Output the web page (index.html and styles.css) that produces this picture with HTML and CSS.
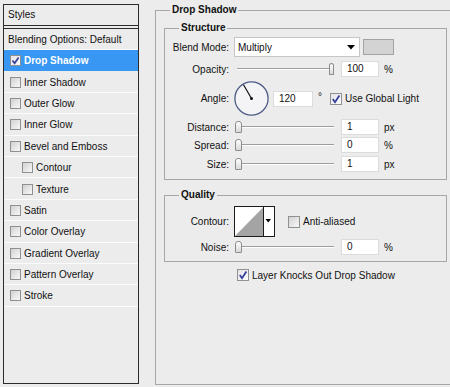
FILE: index.html
```html
<!DOCTYPE html>
<html lang="en">
<head>
    <meta charset="UTF-8">
    <meta name="viewport" content="width=device-width, initial-scale=1.0">
    <title>Layer Style</title>
    <link rel="stylesheet" href="styles.css">
</head>
<body>
    <div class="styles-panel">
        <div class="styles-head">Styles</div>
        <div class="style-item plain">Blending Options: Default</div>
        <div class="style-item selected">
            <span class="cb checked"><svg width="9" height="9" viewBox="0 0 9 9"><path d="M1.5 4.5 L3.6 7.2 L7.6 1.4" fill="none" stroke="#34409a" stroke-width="1.7"/></svg></span>Drop Shadow
        </div>
        <div class="style-item"><span class="cb"></span>Inner Shadow</div>
        <div class="style-item"><span class="cb"></span>Outer Glow</div>
        <div class="style-item"><span class="cb"></span>Inner Glow</div>
        <div class="style-item"><span class="cb"></span>Bevel and Emboss</div>
        <div class="style-item sub"><span class="cb"></span>Contour</div>
        <div class="style-item sub"><span class="cb"></span>Texture</div>
        <div class="style-item"><span class="cb"></span>Satin</div>
        <div class="style-item"><span class="cb"></span>Color Overlay</div>
        <div class="style-item"><span class="cb"></span>Gradient Overlay</div>
        <div class="style-item"><span class="cb"></span>Pattern Overlay</div>
        <div class="style-item"><span class="cb"></span>Stroke</div>
    </div>

    <fieldset class="group effect">
        <legend>Drop Shadow</legend>

        <fieldset class="group section structure">
            <legend>Structure</legend>

            <div class="row blend-row">
                <span class="lbl">Blend Mode:</span>
                <div class="select">
                    Multiply
                    <svg width="8" height="5" viewBox="0 0 8 5"><polygon points="0,0 8,0 4,4.5" fill="#000"/></svg>
                </div>
                <div class="swatch"></div>
            </div>

            <div class="row opacity-row">
                <span class="lbl">Opacity:</span>
                <div class="slider"><span class="thumb max"></span></div>
                <span class="field">100</span>
                <span class="unit">%</span>
            </div>

            <div class="row angle-row">
                <span class="lbl">Angle:</span>
                <svg class="dial" width="35" height="35" viewBox="0 0 35 35">
                    <circle cx="17.5" cy="17.5" r="16.6" fill="#f4f4f7" stroke="#4d5b86" stroke-width="1.3"/>
                    <line x1="17.5" y1="17.5" x2="9.5" y2="3.7" stroke="#111" stroke-width="1.2"/>
                    <circle cx="17.5" cy="17.5" r="1.5" fill="#111"/>
                </svg>
                <span class="field wide">120</span>
                <span class="degree">°</span>
                <span class="cb big checked"><svg width="10" height="10" viewBox="0 0 10 10"><path d="M1.8 5 L4 8.2 L8.4 1.5" fill="none" stroke="#34409a" stroke-width="1.8"/></svg></span>
                <span class="cb-label">Use Global Light</span>
            </div>

            <div class="row distance-row">
                <span class="lbl">Distance:</span>
                <div class="slider"><span class="thumb"></span></div>
                <span class="field">1</span>
                <span class="unit">px</span>
            </div>

            <div class="row spread-row">
                <span class="lbl">Spread:</span>
                <div class="slider"><span class="thumb"></span></div>
                <span class="field">0</span>
                <span class="unit">%</span>
            </div>

            <div class="row size-row">
                <span class="lbl">Size:</span>
                <div class="slider"><span class="thumb"></span></div>
                <span class="field">1</span>
                <span class="unit">px</span>
            </div>
        </fieldset>

        <fieldset class="group section quality">
            <legend>Quality</legend>

            <div class="row contour-row">
                <span class="lbl">Contour:</span>
                <svg class="contour" width="41" height="31" viewBox="0 0 41 31">
                    <rect x="0.5" y="0.5" width="40" height="30" fill="#fff" stroke="#1b1b1b"/>
                    <polygon points="1,30 29.5,1 29.5,30" fill="#a4a4a4"/>
                    <line x1="29.5" y1="0" x2="29.5" y2="31" stroke="#1b1b1b"/>
                    <polygon points="31.5,13 37,13 34.25,16.5" fill="#000"/>
                </svg>
                <span class="cb big"></span>
                <span class="cb-label">Anti-aliased</span>
            </div>

            <div class="row noise-row">
                <span class="lbl">Noise:</span>
                <div class="slider"><span class="thumb"></span></div>
                <span class="field">0</span>
                <span class="unit">%</span>
            </div>
        </fieldset>

        <div class="row knockout-row">
            <span class="cb big checked"><svg width="10" height="10" viewBox="0 0 10 10"><path d="M1.8 5 L4 8.2 L8.4 1.5" fill="none" stroke="#34409a" stroke-width="1.8"/></svg></span>
            <span class="cb-label">Layer Knocks Out Drop Shadow</span>
        </div>
    </fieldset>
</body>
</html>
```

FILE: styles.css
```css
body {
    margin: 0;
    width: 450px;
    height: 387px;
    overflow: hidden;
    display: flex;
    align-items: flex-start;
    background: #ececec;
    font-family: 'Liberation Sans', Arial, sans-serif;
    font-size: 10px;
    color: #111;
}

/* left list of effects */

.styles-panel {
    box-sizing: border-box;
    width: 136px;
    height: 380px;
    margin: 4px 0 0 3px;
    border: 1px solid #2b2b2b;
    flex-shrink: 0;
}

.styles-head {
    height: 20px;
    line-height: 20px;
    padding-left: 4px;
    border-bottom: 4px double #2b2b2b;
}

.style-item {
    box-sizing: border-box;
    height: 21.4px;
    display: flex;
    align-items: center;
    gap: 3px;
    padding: 1px 0 0 6px;
    border-bottom: 1px solid #fbfbfb;
}

.style-item.plain {
    height: 21px;
    padding-left: 4px;
}

.style-item.sub {
    padding-left: 18px;
}

.style-item.selected {
    background: #3797f2;
    border-bottom-color: #3797f2;
    color: #fff;
    font-weight: bold;
}

.cb {
    box-sizing: border-box;
    width: 11px;
    height: 11px;
    flex-shrink: 0;
    display: inline-flex;
    align-items: center;
    justify-content: center;
    border: 1px solid #8f9090;
    background: linear-gradient(135deg, #d2d2d2, #f8f8f8);
}

.cb.big {
    width: 12px;
    height: 12px;
}

.cb.checked {
    background: linear-gradient(135deg, #e2e2e8, #fdfdfd);
}

.cb-label {
    margin-left: 3px;
}

/* right side group boxes */

.group {
    margin: 0;
    padding: 0;
    min-width: 0;
    border: 1px solid #a7a7a7;
}

.group > legend {
    padding: 0 2px;
    font-weight: bold;
    line-height: 12px;
}

.effect {
    box-sizing: border-box;
    width: 295px;
    height: 381px;
    margin: 4px 0 0 16px;
    padding: 6px 0 0 8px;
    border-right: none;
    flex-shrink: 0;
}

.effect > legend {
    margin-left: 6px;
}

.section {
    box-sizing: border-box;
    width: 283px;
}

.section > legend {
    margin-left: 14px;
}

.structure {
    padding-bottom: 7px;
}

.quality {
    margin-top: 9px;
    padding-bottom: 6px;
}

.row {
    display: flex;
    align-items: center;
}

.lbl {
    width: 64px;
    margin-right: 5px;
    text-align: right;
    flex-shrink: 0;
}

.blend-row { height: 20px; margin-top: 3px; }
.opacity-row { height: 16px; margin-top: 4px; }
.angle-row { height: 35px; margin-top: 4px; }
.distance-row { height: 16px; margin-top: 3px; }
.spread-row { height: 16px; margin-top: 2px; }
.size-row { height: 16px; margin-top: 3px; }
.contour-row { height: 31px; margin-top: 5px; }
.noise-row { height: 16px; margin-top: 2px; }

.knockout-row {
    height: 14px;
    margin: 6px 0 0 73px;
}

.select {
    box-sizing: border-box;
    width: 126px;
    height: 20px;
    display: flex;
    align-items: center;
    justify-content: space-between;
    padding: 0 4px 0 3px;
    border: 1px solid #c6c6c6;
    background: #fff;
}

.swatch {
    box-sizing: border-box;
    width: 31px;
    height: 16px;
    margin-left: 3px;
    border: 1px solid #a2a2a2;
    background: #d3d3d3;
}

.slider {
    width: 100px;
    height: 14px;
    display: flex;
    align-items: center;
    background: linear-gradient(#9d9d9d, #9d9d9d) no-repeat 3px 6px / 97px 1px,
                linear-gradient(#fff, #fff) no-repeat 3px 7px / 97px 1px;
}

.thumb {
    box-sizing: border-box;
    width: 7px;
    height: 12px;
    margin-left: 1px;
    border: 1px solid #8c8c8c;
    border-radius: 3px 3px 1px 1px;
    background: linear-gradient(#fff, #d9d9d9);
}

.thumb.max {
    margin-left: 95px;
}

.field {
    box-sizing: border-box;
    width: 38px;
    height: 16px;
    margin-left: 7px;
    padding-left: 5px;
    line-height: 14px;
    border: 1px solid #dcdcdc;
    background: #fff;
}

.field.wide {
    width: 40px;
    margin-left: 4px;
}

.unit {
    margin-left: 5px;
}

.degree {
    margin: 0 8px 5px 5px;
}

.contour {
    flex-shrink: 0;
    margin-right: 13px;
}
```
